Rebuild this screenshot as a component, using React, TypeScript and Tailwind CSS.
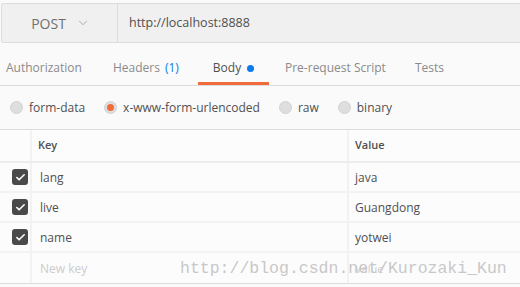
import { ChevronDown, Check } from 'lucide-react';

const rows = [
  { key: 'lang', value: 'java' },
  { key: 'live', value: 'Guangdong' },
  { key: 'name', value: 'yotwei' },
];

function Radio({ checked, label }: { checked?: boolean; label: string }) {
  return (
    <div className="flex items-center gap-[6px]">
      <span className="w-[13px] h-[13px] rounded-full bg-[#dedede] border border-[#d2d2d2] flex items-center justify-center">
        {checked && <span className="w-[7px] h-[7px] rounded-full bg-[#f26b3a]" />}
      </span>
      <span>{label}</span>
    </div>
  );
}

export default function App() {
  return (
    <div
      className="w-[520px] h-[287px] bg-[#fafafa] text-[#505050] overflow-hidden relative"
      style={{ fontFamily: '"Open Sans", "Noto Sans", sans-serif' }}
    >
      {/* URL bar */}
      <div className="pt-[3px] pl-[1px]">
        <div className="flex h-[40px] bg-[#f0f0f0] border-y border-l border-[#dcdcdc] rounded-l-[3px]">
          <div className="w-[116px] flex items-center justify-center gap-[10px] border-r border-[#dcdcdc] text-[14px] text-[#707070] pl-[2px]">
            <span>POST</span>
            <ChevronDown className="w-[14px] h-[14px] text-[#a0a0a0]" strokeWidth={1.5} />
          </div>
          <div className="flex items-center pl-[11px] text-[12.5px] text-[#505050]">http://localhost:8888</div>
        </div>
      </div>

      {/* Tabs */}
      <div className="mt-[7px] h-[36px] flex items-stretch border-b border-[#dcdcdc] text-[12px] text-[#8a8a8a]">
        <div className="pl-[6px] w-[107px] flex items-center pt-[1px]">Authorization</div>
        <div className="w-[91px] flex items-center pl-[6px] pt-[1px]">
          Headers <span className="ml-[5px] text-[#097bed]">(1)</span>
        </div>
        <div className="w-[71px] flex items-center justify-center gap-[6px] text-[#505050] border-b-[3px] border-[#f26b3a] pt-[4px]">
          Body <span className="w-[7px] h-[7px] rounded-full bg-[#097bed]" />
        </div>
        <div className="pl-[16px] w-[146px] flex items-center pt-[1px]">Pre-request Script</div>
        <div className="flex items-center pt-[1px]">Tests</div>
      </div>

      {/* Body types */}
      <div className="h-[44px] flex items-center gap-[19px] pl-[10px] text-[12px] text-[#505050] border-b border-[#dcdcdc]">
        <Radio label="form-data" />
        <Radio checked label="x-www-form-urlencoded" />
        <Radio label="raw" />
        <Radio label="binary" />
      </div>

      {/* Table */}
      <div className="bg-[#fcfcfc] border-b border-[#dcdcdc]">
        <div className="flex h-[33px] border-b-2 border-[#ececec] text-[11px] font-semibold text-[#505050]">
          <div className="w-[32px] border-r-2 border-[#f2f2f2]" />
          <div className="w-[317px] border-r-2 border-[#f2f2f2] flex items-center pl-[6px]">Key</div>
          <div className="flex items-center pl-[6px]">Value</div>
        </div>
        {rows.map((r) => (
          <div key={r.key} className="flex h-[30px] border-b-2 border-[#f3f3f3] text-[12px]">
            <div className="w-[32px] border-r-2 border-[#f2f2f2] flex items-center pl-[12px]">
              <span className="w-[16px] h-[16px] rounded-[3px] bg-[#4a4a4a] flex items-center justify-center">
                <Check className="w-[11px] h-[11px] text-white" strokeWidth={3.5} />
              </span>
            </div>
            <div className="w-[317px] border-r-2 border-[#f2f2f2] flex items-center pl-[8px] pt-[2px]">{r.key}</div>
            <div className="flex items-center pl-[6px] pt-[2px]">{r.value}</div>
          </div>
        ))}
        <div className="flex h-[30px] text-[12px] text-[#cccccc]">
          <div className="w-[32px] border-r-2 border-[#f2f2f2]" />
          <div className="w-[317px] border-r-2 border-[#f2f2f2] flex items-center pl-[8px] pt-[2px]">New key</div>
          <div className="flex items-center pl-[6px] text-[11px] pt-[2px]">Value</div>
        </div>
      </div>

      {/* Watermark */}
      <div
        className="absolute left-[180px] top-[257px] text-[16.5px] text-[#c8c8c8] pointer-events-none"
        style={{ fontFamily: '"Liberation Mono", monospace' }}
      >
        http://blog.csdn.net/Kurozaki_Kun
      </div>
    </div>
  );
}
